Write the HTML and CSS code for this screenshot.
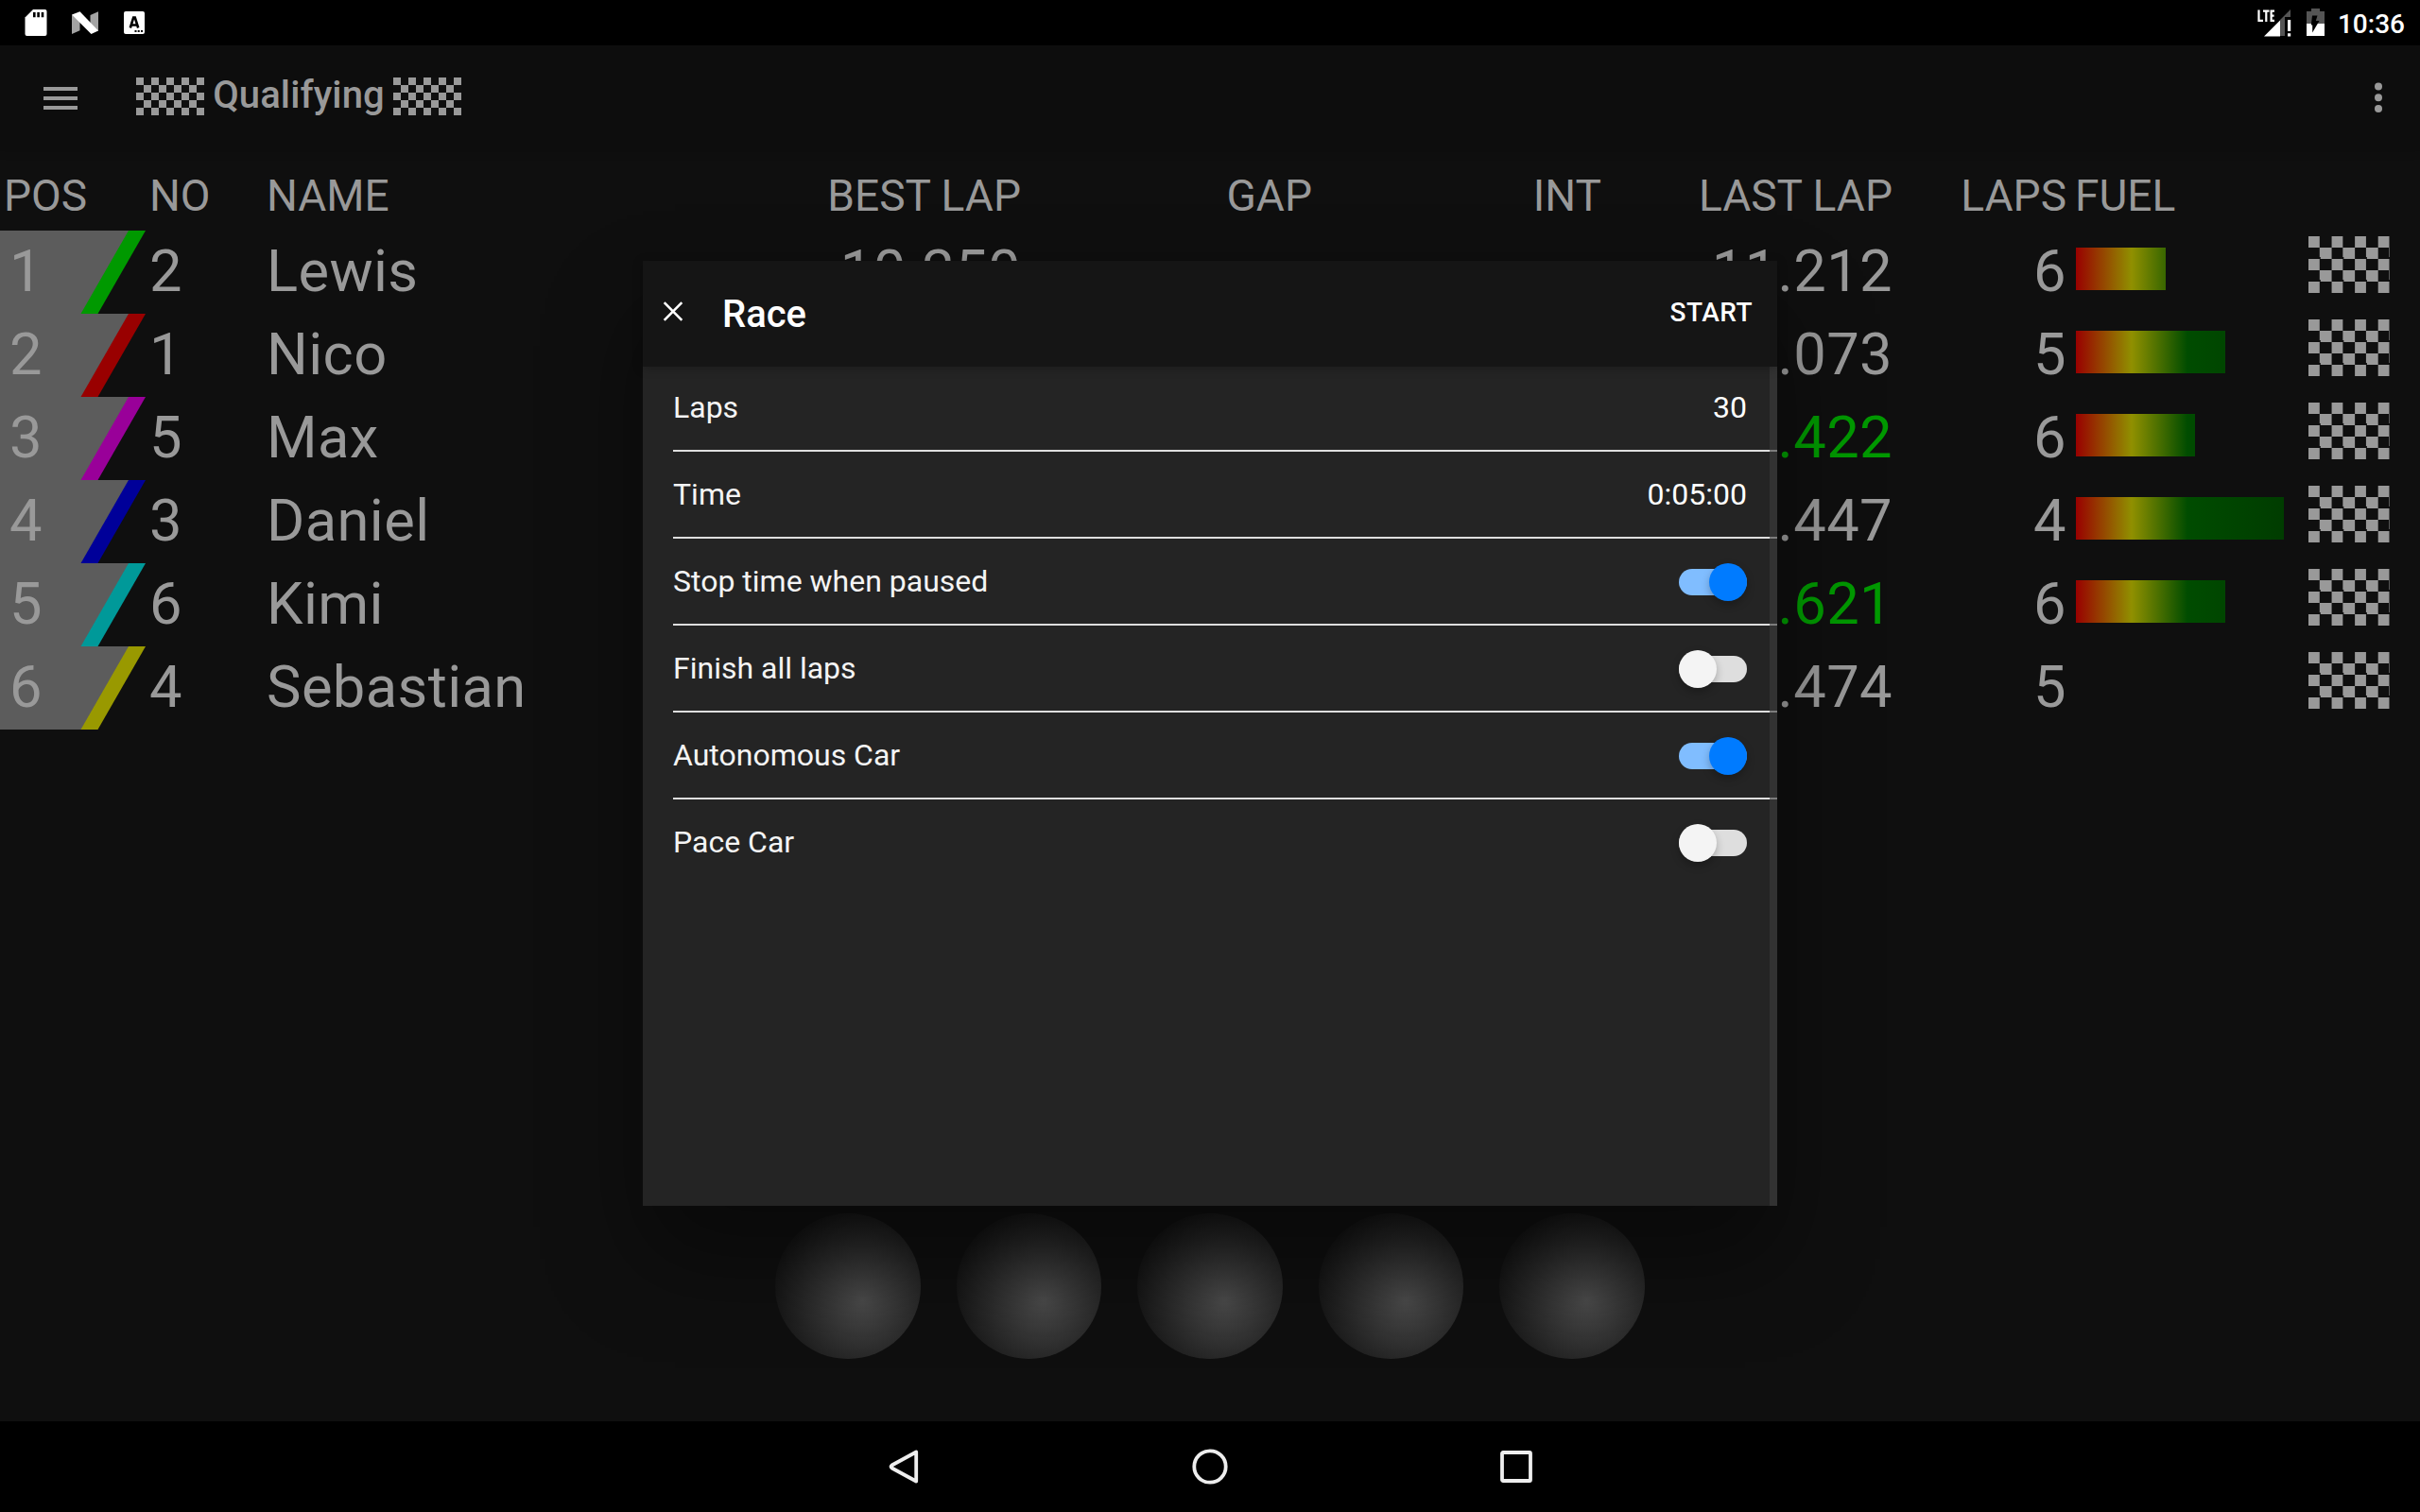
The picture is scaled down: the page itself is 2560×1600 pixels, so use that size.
FILE: index.html
```html
<!DOCTYPE html>
<html lang="en">
<head>
<meta charset="utf-8">
<title>Qualifying</title>
<link rel="stylesheet" href="styles.css">
</head>
<body>
<div class="device">
  <header class="status">
    <svg class="status-left" width="180" height="48" viewBox="0 0 180 48">
      <path fill="#fff" d="M35 10H47.500Q49.500 10 49.500 12V36Q49.500 38 47.500 38H28.500Q26.500 38 26.500 36V18.500Z"/>
      <path fill="#000" d="M35 13h2.600v5.200H35zM39.300 13h2.600v5.200h-2.600zM43.700 13h2.600v5.200h-2.600z"/>
      <path fill="#a3a3a3" d="M76 15.500L84.500 21V32.300L76 36ZM104 12.300L95.500 16V27L104 33Z"/>
      <path fill="#fff" d="M76 15.500L84.500 12.300L104 32.500L96.500 36Z"/>
      <rect x="131" y="12" width="22" height="24" rx="2" fill="#fff"/>
      <path fill="none" stroke="#000" stroke-width="2.600" d="M137.800 29.500L141.200 18.500H142.800L146.200 29.500M139 26.500H145"/>
      <path fill="#000" d="M142.500 32h2v2h-2zM145.700 32h2v2h-2zM149 32h2v2h-2z"/>
    </svg>
    <div class="status-right">
      <svg width="80" height="48" viewBox="2384 0 80 48">
        <g fill="none" stroke="#fff" stroke-width="2.200"><path d="M2389.500 10.500V21.800H2394M2394 11.600H2400.500M2397.300 11V23M2406 11.600H2402.600V21.800H2406M2402.600 16.600H2405.600"/></g>
        <path fill="#555" d="M2423 10V18H2417V38H2412V21Z"/>
        <path fill="#fff" d="M2412 21.500V38.500H2395ZM2420 21h3.200v12H2420zM2420 35.300h3.200v3.200H2420z"/>
        <path fill="#555" d="M2440 12h5V9h9v3h5v13h-19z"/>
        <path fill="#fff" d="M2440 25h19v13h-19z"/>
        <path fill="#000" d="M2446 16.500H2451.500L2449.800 22H2453.500L2446.200 34.500V26.500H2444.800Z"/>
      </svg>
      <span class="clock">10:36</span>
    </div>
  </header>

  <header class="toolbar">
    <svg class="menu" width="36" height="24" viewBox="0 0 36 24"><path fill="#999" d="M0 0h36v4H0zM0 10h36v4H0zM0 20h36v4H0z"/></svg>
    <h1 class="title"><i class="flag flag-small"></i><span>Qualifying</span><i class="flag flag-small"></i></h1>
    <svg class="more" width="8" height="32" viewBox="0 0 8 32"><g fill="#999"><circle cx="4" cy="4.500" r="4"/><circle cx="4" cy="16.200" r="4"/><circle cx="4" cy="27.900" r="4"/></g></svg>
  </header>

  <main class="content">
    <div class="row head"><span>POS</span><span>NO</span><span>NAME</span><span class="r">BEST LAP</span><span class="r">GAP</span><span class="r">INT</span><span class="r">LAST LAP</span><span class="r">LAPS</span><span>FUEL</span><span></span></div>
    <div class="row car green"><span class="pos">1</span><span>2</span><span>Lewis</span><span class="r">10.250</span><span></span><span></span><span class="r">11.212</span><span class="r">6</span><span><i class="fuel" style="width:95px"></i></span><span><i class="flag"></i></span></div>
    <div class="row car red"><span class="pos">2</span><span>1</span><span>Nico</span><span></span><span></span><span></span><span class="r">11.073</span><span class="r">5</span><span><i class="fuel" style="width:158px"></i></span><span><i class="flag"></i></span></div>
    <div class="row car magenta"><span class="pos">3</span><span>5</span><span>Max</span><span></span><span></span><span></span><span class="r best">10.422</span><span class="r">6</span><span><i class="fuel" style="width:126px"></i></span><span><i class="flag"></i></span></div>
    <div class="row car blue"><span class="pos">4</span><span>3</span><span>Daniel</span><span></span><span></span><span></span><span class="r">11.447</span><span class="r">4</span><span><i class="fuel" style="width:220px"></i></span><span><i class="flag"></i></span></div>
    <div class="row car cyan"><span class="pos">5</span><span>6</span><span>Kimi</span><span></span><span></span><span></span><span class="r best">10.621</span><span class="r">6</span><span><i class="fuel" style="width:158px"></i></span><span><i class="flag"></i></span></div>
    <div class="row car yellow"><span class="pos">6</span><span>4</span><span>Sebastian</span><span></span><span></span><span></span><span class="r">11.474</span><span class="r">5</span><span></span><span><i class="flag"></i></span></div>
    <div class="lights"><i></i><i></i><i></i><i></i><i></i></div>
  </main>

  <nav class="nav">
    <svg width="40" height="40" viewBox="0 0 40 40"><path d="M33.200 4.500V35.500L7.500 21.500Q5.500 20 7.500 18.500Z"/></svg>
    <svg width="40" height="40" viewBox="0 0 40 40"><circle cx="20" cy="20" r="16.700"/></svg>
    <svg width="40" height="40" viewBox="0 0 40 40"><rect x="5" y="5" width="30" height="30" rx="1"/></svg>
  </nav>

  <section class="modal">
    <header class="modal-head">
      <svg width="22" height="22" viewBox="0 0 22 22"><path fill="none" stroke="#fff" stroke-width="2.600" d="M1.700 1.200L20.300 19.800M20.300 1.200L1.700 19.800"/></svg>
      <h2>Race</h2>
      <button class="start">START</button>
    </header>
    <div class="modal-body">
      <div class="item"><span>Laps</span><b>30</b></div>
      <div class="item"><span>Time</span><b>0:05:00</b></div>
      <div class="item"><span>Stop time when paused</span><i class="toggle on"></i></div>
      <div class="item"><span>Finish all laps</span><i class="toggle"></i></div>
      <div class="item"><span>Autonomous Car</span><i class="toggle on"></i></div>
      <div class="item"><span>Pace Car</span><i class="toggle"></i></div>
      <div class="scrollbar"></div>
    </div>
  </section>
</div>
</body>
</html>
```
FILE: styles.css
```css
* { box-sizing: border-box; }
body {
  margin: 0;
  background: #0f0f0f;
  font-family: Roboto, "Liberation Sans", sans-serif;
  color: #999;
}
.device {
  position: relative;
  width: 2560px;
  height: 1600px;
  display: flex;
  flex-direction: column;
  overflow: hidden;
}
svg { display: block; flex: none; }
h1, h2 { margin: 0; font-weight: 500; }

/* system status bar */
.status {
  height: 48px;
  background: #000;
  display: flex;
  justify-content: space-between;
  padding-right: 16px;
}
.status-right { display: flex; gap: 9px; }
.clock {
  font-size: 28px;
  font-weight: 500;
  line-height: 51px;
  color: #fff;
}

/* app toolbar */
.toolbar {
  position: relative;
  height: 112px;
  background: #0d0d0d;
  box-shadow: 0 2px 8px rgba(0, 0, 0, .12);
  display: flex;
  align-items: center;
  padding: 0 40px 0 46px;
}
.title {
  flex: 1;
  display: flex;
  align-items: center;
  padding: 0 0 4px 62px;
  font-size: 40px;
  line-height: 48px;
}
.title span {
  width: 200px;
  padding-bottom: 3px;
  line-height: 45px;
  text-align: center;
  white-space: nowrap;
  letter-spacing: .1px;
}
.more { margin-bottom: 2px; }

.flag {
  display: block;
  width: 86px;
  height: 60px;
  background: repeating-conic-gradient(#0f0f0f 0 25%, #999 0 50%) 0 0 / 24.571px 24px;
}
.flag-small { flex: none; width: 72px; height: 40px; background-size: 16px 16px; }

/* leaderboard */
.content { flex: 1; display: flex; flex-direction: column; }
.row {
  display: grid;
  grid-template-columns: 154px 124px 498px 308px 308px 306px 308px 184px 248px 122px;
  height: 88px;
  font-size: 61.44px;
  line-height: 86px;
  letter-spacing: .4px;
  white-space: nowrap;
}
.row > span { padding: 0 4px; }
.row > .r { text-align: right; }
.row.head { height: 84px; font-size: 46.08px; line-height: 95px; letter-spacing: 0; }
.car > .pos {
  position: relative;
  z-index: 0;
  padding-left: 10px;
}
.pos::before, .pos::after {
  content: "";
  position: absolute;
  z-index: -1;
  inset: 0;
}
.pos::before {
  background: var(--car);
  clip-path: polygon(0 0, 154px 0, 103.500px 100%, 0 100%);
}
.pos::after {
  background: #5c5c5c;
  clip-path: polygon(0 0, 136px 0, 85.500px 100%, 0 100%);
}
.green { --car: #009900; }
.red { --car: #990000; }
.magenta { --car: #990099; }
.blue { --car: #000099; }
.cyan { --car: #009999; }
.yellow { --car: #999900; }
.best { color: #009900; }
.row > span:nth-child(9) { padding-left: 6px; }
.head > span:nth-child(9) { padding-left: 5px; }
.fuel {
  display: block;
  height: 45px;
  margin-top: 18px;
  background: linear-gradient(90deg, #990000, #909000 59px, #004c00 118px, #003c00 220px) 0 0 / 220px 100%;
}
.car .flag { margin-top: 6px; }

.lights {
  margin-top: auto;
  padding-bottom: 66px;
  display: flex;
  justify-content: center;
  gap: 38px;
}
.lights i {
  width: 153.6px;
  height: 153.6px;
  border-radius: 50%;
  background: radial-gradient(circle at 60% 60%, #4b4b4b, #000);
}

/* system navigation bar */
.nav {
  height: 96px;
  background: #000;
  display: flex;
  justify-content: center;
  align-items: center;
  gap: 284px;
}
.nav svg { fill: none; stroke: #eee; stroke-width: 3.8; stroke-linejoin: round; }

/* race dialog */
.modal {
  position: absolute;
  left: 680px;
  top: 276px;
  width: 1200px;
  height: 1000px;
  display: flex;
  flex-direction: column;
  background: #242424;
  box-shadow: 0 56px 96px rgba(0, 0, 0, .4);
  color: #f4f4f4;
}
.modal-head {
  position: relative;
  z-index: 1;
  height: 112px;
  padding: 0 26px 4px 21px;
  display: flex;
  align-items: center;
  background: #151515;
  color: #fff;
  box-shadow: 0 2px 10px rgba(0, 0, 0, .25);
}
.modal-head h2 { flex: 1; padding: 6px 0 0 41px; font-size: 40px; line-height: 48px; }
.start {
  border: 0;
  padding: 2px 0 0;
  background: none;
  color: #fff;
  font: 500 28px/32px Roboto, sans-serif;
  letter-spacing: .5px;
}
.modal-body { position: relative; flex: 1; padding-left: 32px; }
.item {
  display: flex;
  justify-content: space-between;
  align-items: center;
  height: 92px;
  padding-right: 32px;
  border-bottom: 2px solid #dedede;
  font-size: 32px;
}
.item:first-child { margin-top: -2px; }
.item:nth-child(6) { border-color: transparent; }
.item b { font-weight: 400; color: #fff; }
.toggle {
  position: relative;
  width: 72px;
  height: 28px;
  margin-top: 2px;
  border-radius: 14px;
  background: #dedede;
}
.toggle::before {
  content: "";
  position: absolute;
  left: 0;
  top: -6px;
  width: 40px;
  height: 40px;
  border-radius: 50%;
  background: #f4f4f4;
  box-shadow: 0 4px 8px rgba(0, 0, 0, .25);
}
.toggle.on { background: #80bdff; }
.toggle.on::before { left: 32px; background: #007bff; }
.scrollbar {
  position: absolute;
  top: 0;
  right: 0;
  bottom: 0;
  width: 8px;
  background: rgba(60, 60, 60, .6);
}
```
